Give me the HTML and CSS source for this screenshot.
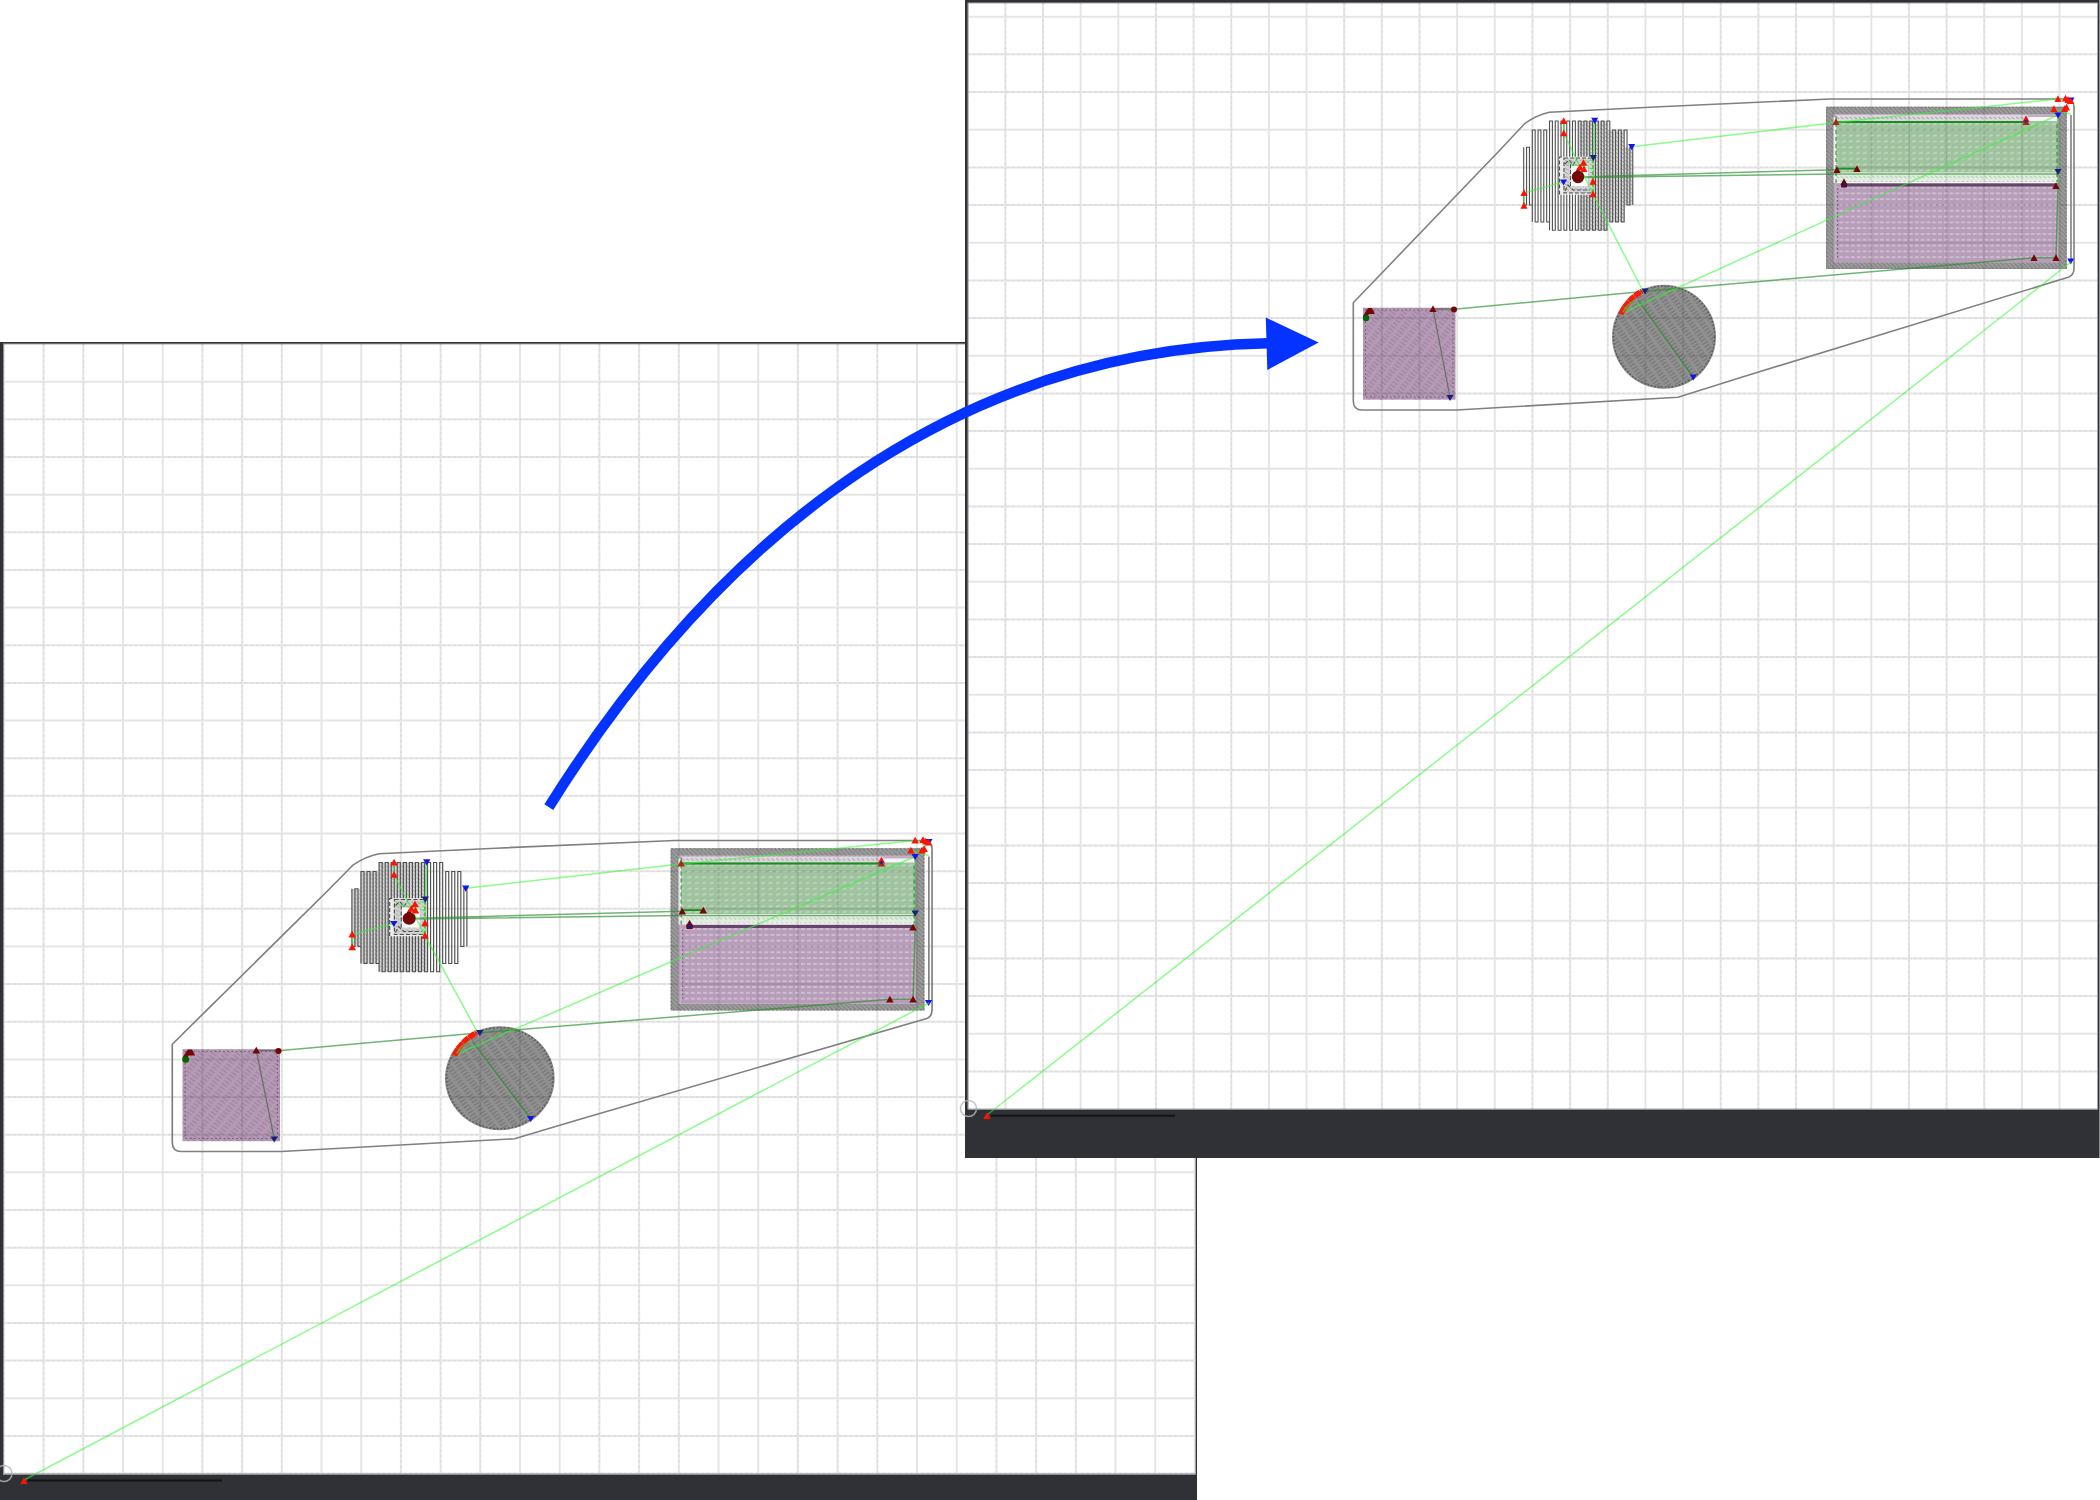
FILE: index.html
```
<!DOCTYPE html>
<html lang="en">
<head>
<meta charset="utf-8">
<title>Toolpath placement</title>
<link rel="stylesheet" href="styles.css">
</head>
<body>
<main>
<svg class="scene" viewBox="0 0 2100 1500" width="2100" height="1500" role="img" aria-label="Toolpath moved on the work area">
  <defs>
    <path id="up" d="M0-3.800 3.600 3H-3.600Z"/>
    <path id="down" d="M0 3.600 3.500-2.600H-3.500Z"/>
    <pattern id="hatchBand" width="4.4" height="4.4" patternUnits="userSpaceOnUse"><rect width="4.4" height="4.4" fill="#9c9c9c"/><path d="M0 0 4.4 4.4" stroke="#7c7c7c"/></pattern>
    <pattern id="hatchDisc" width="9" height="3.4" patternUnits="userSpaceOnUse" patternTransform="rotate(-35)"><rect width="9" height="3.4" fill="#909090"/><path d="M0 1H6" stroke="#707070" stroke-width="1"/></pattern>
    <pattern id="hatchSquare" width="9" height="3.6" patternUnits="userSpaceOnUse" patternTransform="rotate(38)"><rect width="9" height="3.6" fill="#b59ab6"/><path d="M0 1H6" stroke="#9b7e9d" stroke-width="1"/></pattern>
    <pattern id="weavePurple" width="5.8" height="5.8" patternUnits="userSpaceOnUse"><rect width="5.8" height="5.8" fill="#b79db9"/><path d="M.8 2H4.6" stroke="#d0c0d2" stroke-width="1.8"/></pattern>
    <pattern id="weaveGreen" width="7" height="5.8" patternUnits="userSpaceOnUse"><rect width="7" height="5.8" fill="#9fc29f"/><path d="M.8 2.6 4.8 1.8" stroke="#bdd9bc" stroke-width="1.6"/></pattern>
    <pattern id="weaveLight" width="4.5" height="5" patternUnits="userSpaceOnUse"><rect width="4.5" height="5" fill="#e3eee3"/><path d="M0 1 3 3" stroke="#b5cdb5"/></pattern>
    <pattern id="weaveGrey" width="4.5" height="4" patternUnits="userSpaceOnUse"><rect width="4.5" height="4" fill="#dedbe0"/><path d="M0 1 3 3" stroke="#aaa4ab"/></pattern>
    <pattern id="shade" width="5" height="4" patternUnits="userSpaceOnUse"><rect width="5" height="4" fill="#ccc" fill-opacity=".75"/><path d="M0 0 4 2.4" stroke="#999" stroke-width=".8"/></pattern>
    <clipPath id="leftClip"><rect x="3" y="344" width="1192" height="1130"/></clipPath>
    <clipPath id="rightClip"><rect x="968" y="3" width="1129" height="1106"/></clipPath>
    <clipPath id="fills"><rect x="1826" y="106.7" width="240.8" height="162.3"/><rect x="1363" y="307.7" width="92.5" height="92"/><circle cx="1664" cy="336.7" r="52"/></clipPath>

    <g id="job">
      <path class="hull" d="M1353.3 302.7 1500 150 1525 123.3Q1537 115 1549.3 112.3L1660 106.7 1830 99H2065Q2074 99 2074 107V268Q2074 275 2069 277L1740 377.7 1678 397.3 1456.7 410H1362Q1353.3 410 1353.3 401Z"/>
      <path class="hull" d="M2071 115V262"/>

      <rect x="1826" y="106.7" width="240.8" height="162.3" fill="url(#hatchBand)"/>
      <rect class="band-edge" x="1826.7" y="107.4" width="239.4" height="161"/>
      <rect x="1833.5" y="114" width="225" height="148.5" fill="#c4abc6"/>
      <rect x="1833.5" y="117" width="225" height="66" fill="#f7f7f7"/>
      <rect x="1836" y="115" width="192" height="7" fill="url(#weaveGrey)"/>
      <rect x="1836" y="121" width="221" height="51.5" fill="url(#weaveGreen)"/>
      <rect x="1836" y="174" width="221" height="8" fill="url(#weaveLight)"/>
      <rect x="1836" y="184" width="221" height="78" fill="url(#weavePurple)"/>
      <path class="purple-line" d="M1842 185H2057"/>
      <path class="dotted" d="M1837.500 188V260"/>
      <path class="green-edge" d="M1836 116V184M2057 124V182"/>

      <rect x="1363" y="307.700" width="92.500" height="92" fill="url(#hatchSquare)"/>
      <rect class="dotted" x="1365.500" y="310" width="87.500" height="87"/>
      <circle cx="1664" cy="336.700" r="52" fill="url(#hatchDisc)"/>
      <circle class="disc-rim" cx="1664" cy="336.700" r="50.500"/>
    </g>

    <g id="travel">
      <path class="grey-move" d="M1454 309H1433L1450 397"/>
      <path class="deep" d="M1836 122H2026M1837 168.700H1857"/>
      <path class="mid" d="M1454 309.300 1643 291.500 2034 257.700H2056L2058 186M2058 115V185M1638 300 1693 377"/>
      <path class="mid" d="M1578 177 1837 169.700M1578 177.500 1837 174H2058"/>
      <path class="go" d="M1631.700 146.700 1836 122.500 2058 99L2070 101M2058 115 1621.700 313.300M2058 115 2070 102M2054 109 2071 114"/>
      <path class="go" d="M1563.700 121V133.300L1580 167 1593 194.300 1643 291M1524 205.700V193L1563.500 182M1594.700 120.300 1593.300 157.700V194M1593 158 1578 169M1567 163 1593 169"/>
      <path class="scan" d="M1621 314Q1627 300 1642 291"/>
      <g class="dark"><circle cx="1578" cy="177" r="6.200"/><use href="#up" x="1578" y="171"/><use href="#up" x="1837" y="170"/><use href="#up" x="1857" y="169"/><use href="#up" x="1844" y="182"/><rect x="1841" y="183" width="6" height="4.500"/><use href="#up" x="2056" y="186"/><use href="#up" x="2034" y="258"/><use href="#up" x="2056" y="258"/><use href="#up" x="1433" y="309"/><circle cx="1454" cy="309.500" r="3"/><path d="M1363 316 1368 308H1372L1375 314H1369L1366 318Z"/></g>
      <circle cx="1366" cy="318" r="3.200" fill="#006400"/>
      <g class="navy"><use href="#down" x="1594.700" y="120.300"/><use href="#down" x="1631.700" y="146.700"/><use href="#down" x="1563.500" y="182"/><use href="#down" x="2070.700" y="261"/><use href="#down" x="2071" y="100"/><use href="#down" x="2058" y="115"/><use href="#down" x="1693.300" y="377"/></g>
      <g class="deep-navy"><use href="#down" x="1593.300" y="157.700"/><use href="#down" x="2058" y="171.500"/><use href="#down" x="1450" y="397.500"/><use href="#down" x="1645" y="291"/><circle cx="1844" cy="185" r="2"/></g>
      <g class="red"><use href="#up" x="1563.700" y="121"/><use href="#up" x="1563.700" y="133.300"/><use href="#up" x="1524" y="193"/><use href="#up" x="1524" y="205.700"/><use href="#up" x="1593" y="181.700"/><use href="#up" x="1593" y="194.300"/><use href="#up" x="1583.500" y="162.700"/><use href="#up" x="1580" y="167.300"/><use href="#up" x="1584" y="169"/><use href="#up" x="2058" y="99"/><use href="#up" x="2065.500" y="98.500"/><use href="#up" x="2068" y="100"/><use href="#up" x="2070.500" y="101"/><use href="#up" x="2054" y="109"/><use href="#up" x="2064.500" y="109"/><use href="#up" x="2066.500" y="107.500"/><use href="#up" x="2026" y="119"/></g>
      <g class="brick"><use href="#up" x="1836" y="122"/><use href="#up" x="2026" y="122"/></g>
      <circle cx="2026" cy="121" r="1.500" fill="#22a"/>
      <path class="go" d="M1623 312 1628 305 1636 299"/>
    </g>
  </defs>

  <rect class="frame" x="0" y="342" width="1197" height="1158"/>
  <rect class="sheet" x="3.500" y="344" width="1192" height="1130"/>
  <g id="leftGrid" clip-path="url(#leftClip)"></g>
  <g transform="translate(182.500 741.500) scale(1.0542 1) translate(-1363 0)">
    <use href="#job"/>
    <g clip-path="url(#fills)"><use class="overlay" href="#leftGrid" transform="translate(1363 0) scale(.9486 1) translate(-182.500 -741.500)"/></g>
    <g id="leftComb"></g><use href="#travel"/>
  </g>
  <path class="go" d="M929 1003 24 1480"/>
  <path class="start-line" d="M28 1480.500H222"/>
  <circle class="origin" cx="4" cy="1473.500" r="8"/>
  <use class="red" href="#up" x="24" y="1481"/>
  <path class="edge" d="M3 1474.500H1195"/>

  <rect class="frame" x="965" y="0" width="1135" height="1158"/>
  <rect class="sheet" x="968" y="3" width="1129.500" height="1106"/>
  <g id="rightGrid" clip-path="url(#rightClip)"></g>
  <use href="#job"/>
  <g clip-path="url(#fills)"><use class="overlay" href="#rightGrid"/></g>
  <g id="rightComb"></g><use href="#travel"/>
  <path class="go" d="M2071 262 987 1115"/>
  <path class="start-line" d="M991 1115.700H1175"/>
  <circle class="origin" cx="968.500" cy="1108.500" r="8"/>
  <use class="red" href="#up" x="987" y="1116"/>
  <path class="edge" d="M2099.500 0V1158M968 1109.500H2098"/>

  <path class="arrow" d="M548.800 807.100C741.500 499 988 348.500 1268 343.300"/>
  <path class="arrow-head" d="M1265.800 317.600 1318.600 342.600 1267.300 370Z"/>
</svg>
</main>
<script src="scene.js"></script>
</body>
</html>
```
FILE: styles.css
```
body { margin: 0; background: #fff; font-family: "Liberation Sans", sans-serif; }
.scene { display: block; }
.frame { fill: #303136; }
.sheet { fill: #fff; stroke: #a5a7a8; stroke-width: 1; }
.grid { stroke: #000; stroke-opacity: .1; stroke-width: 2; fill: none; }
.grid-dash { stroke: #000; stroke-opacity: .03; stroke-width: 2.4; stroke-dasharray: 2 3.5; fill: none; }
.overlay { opacity: .8; }
.hull { fill: none; stroke: #808080; stroke-width: 1.6; }
.band-edge { fill: none; stroke: #7d7d7d; stroke-width: 1.3; stroke-dasharray: 1.5 2; }
.comb { fill: none; stroke: #505050; stroke-width: 1.1; }
.dotted { fill: none; stroke: #775c7a; stroke-width: 1.1; stroke-dasharray: 1.5 2.5; }
.disc-rim { fill: none; stroke: #555; stroke-width: 1.3; stroke-dasharray: 1.5 2; }
.purple-line { stroke: #65466a; stroke-width: 3; }
.green-edge { stroke: #3f9a48; stroke-width: 1.2; stroke-dasharray: 4 3; fill: none; }
.grey-move { fill: none; stroke: #6c706c; stroke-width: 1.3; }
.deep { fill: none; stroke: #198c22; stroke-width: 1.8; }
.mid { fill: none; stroke: #258c2b; stroke-opacity: .65; stroke-width: 1.5; }
.go { fill: none; stroke: #2dfa2d; stroke-opacity: .55; stroke-width: 1.5; }
.scan { fill: none; stroke: #fb1a08; stroke-width: 5.5; stroke-dasharray: 7 .6; }
.red { fill: #fa1408; }
.brick { fill: #a52a18; }
.dark { fill: #740606; }
.navy { fill: #1414e6; }
.deep-navy { fill: #18207e; }
.start-line { stroke: #121416; stroke-width: 2; }
.origin { fill: none; stroke: #b5b5b5; stroke-opacity: .85; stroke-width: 1.5; }
.edge { fill: none; stroke: #8d9091; stroke-width: 1; }
.arrow { fill: none; stroke: #0433ff; stroke-width: 10.5; }
.arrow-head { fill: #0433ff; }
```
FILE: scene.js
```
const NS = "http://www.w3.org/2000/svg";
function add(parent, tag, attrs) {
  const el = document.createElementNS(NS, tag);
  for (const k in attrs) el.setAttribute(k, attrs[k]);
  parent.appendChild(el);
}

// Work area grid: every line is solid, most carry a fine dash on top.
function grid(id, x0, y0, x1, y1, fx, fy, px, py) {
  const g = document.getElementById(id);
  let solid = "", dash = "", n = 0;
  for (let x = fx; x < x1; x += px, n++) {
    const d = `M${x.toFixed(2)} ${y0}V${y1}`;
    solid += d;
    if (n % 5 < 3) dash += d;
  }
  n = 0;
  for (let y = fy; y < y1; y += py, n++) {
    const d = `M${x0} ${y.toFixed(2)}H${x1}`;
    solid += d;
    if (n % 3) dash += d;
  }
  add(g, "path", { class: "grid", d: solid });
  add(g, "path", { class: "grid-dash", d: dash });
}
grid("leftGrid", 3, 344, 1195, 1474, 3.9, 381.7, 39.7, 37.65);
grid("rightGrid", 968, 3, 2097, 1109, 967.7, 16.7, 37.65, 37.67);

// Octagonal comb: one serpentine path, its cavity cut out around the core.
function comb(id, shadeFrom, shadeTo) {
  const g = document.getElementById(id);
  const range = x => x < 1532 || x > 1624.5 ? [147.3, 205]
    : x < 1549 || x > 1607.5 ? [130, 222] : [121, 230.3];
  const steps = [[1523.5, 1532], [1532, 1549], [1549, 1607.5], [1607.5, 1624.5], [1624.5, 1632.7]];
  for (const [a, b] of steps) {
    const l = Math.max(a, shadeFrom), r = Math.min(b, shadeTo);
    if (r > l) {
      const [t, u] = range((a + b) / 2);
      add(g, "rect", { x: l, y: t, width: r - l, height: u - t, fill: "url(#shade)" });
    }
  }
  let d = "", down = true;
  for (let i = 0; i < 39; i++) {
    const x = 1523.7 + i * 2.87;
    const [t, b] = range(x);
    d += (i ? "L" : "M") + `${x.toFixed(2)} ${down ? t : b}V${down ? b : t}`;
    down = !down;
  }
  // squared joints between neighbouring teeth
  d = d.replace(/L([\d.]+) ([\d.]+)/g, "H$1V$2");
  add(g, "path", { class: "comb", d });
  add(g, "rect", { x: 1559.5, y: 156.700, width: 34, height: 38, fill: "#eee" });
  add(g, "rect", { x: 1563.5, y: 158, width: 29, height: 35, fill: "url(#shade)" });
  add(g, "rect", { x: 1571, y: 166, width: 17, height: 20, fill: "#fff" });
  add(g, "path", { class: "comb", "stroke-dasharray": "4 2", d: "M1562 157H1559.500V194H1562M1564 158H1593V193H1564ZM1570.500 164V186M1565 164 1569 160 1573 165 1577 159M1565 191 1568 185 1573 190H1590" });
}
comb("leftComb", 1523, 1596);
comb("rightComb", 1578, 1633);
```
